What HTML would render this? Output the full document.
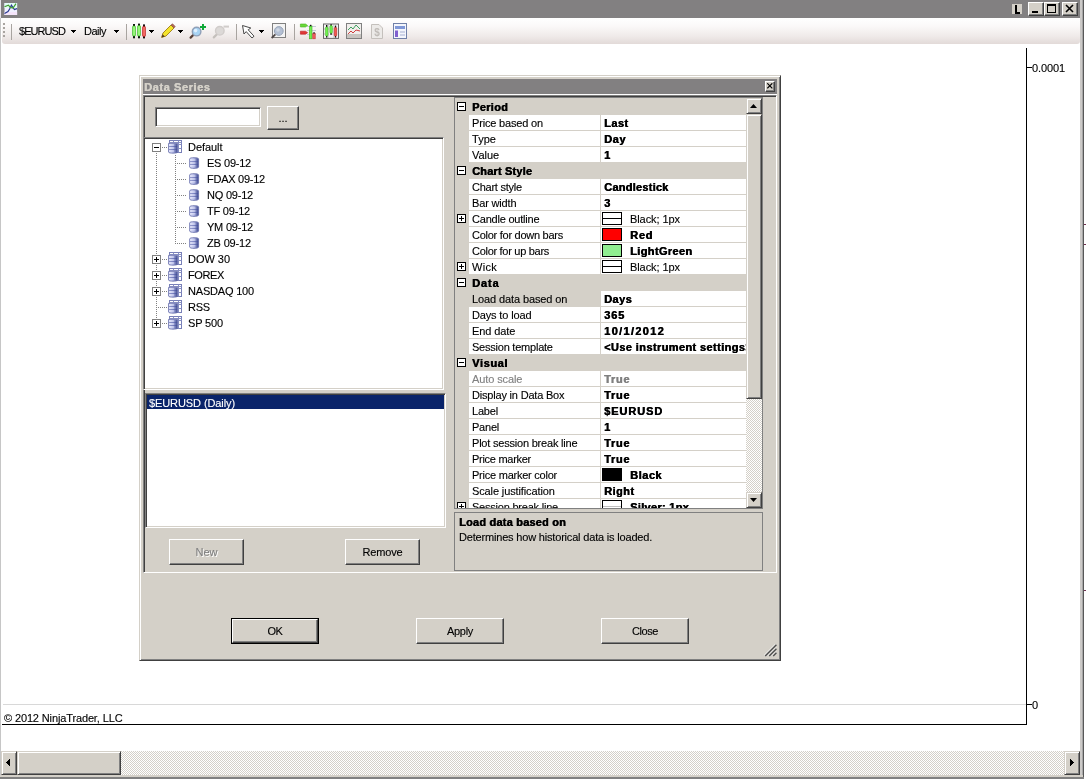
<!DOCTYPE html>
<html><head><meta charset="utf-8"><title>Data Series</title>
<style>
*{box-sizing:border-box;margin:0;padding:0}
html,body{width:1086px;height:780px;overflow:hidden;background:#fff}
body{position:relative;font-family:"Liberation Sans",sans-serif;font-size:11px;color:#000;line-height:1;-webkit-text-stroke:.12px currentColor}
.a{position:absolute}
.t{position:absolute;white-space:nowrap;font-size:11px;line-height:13px;height:13px}
.b{font-weight:bold}
.cat,.row .v{text-shadow:.45px 0 0 currentColor}
.face{background:#D4D0C8}
.btn{position:absolute;background:#D4D0C8;border:1px solid;border-color:#fff #404040 #404040 #fff;box-shadow:inset -1px -1px 0 #808080}
.btn span{position:absolute;left:0;right:0;text-align:center;font-size:11px;line-height:13px}
.sunk{position:absolute;border:1px solid;border-color:#808080 #fff #fff #808080}
.sunk2{position:absolute;border:1px solid;border-color:#808080 #fff #fff #808080;box-shadow:inset 1px 1px 0 #404040, inset -1px -1px 0 #D4D0C8}
.dither{background-image:conic-gradient(#fff 25%,#D4D0C8 0 50%,#fff 0 75%,#D4D0C8 0);background-size:2px 2px}
.sb{position:absolute;background:#D4D0C8;border:1px solid;border-color:#D4D0C8 #404040 #404040 #D4D0C8;box-shadow:inset 1px 1px 0 #fff, inset -1px -1px 0 #808080}
.row{position:absolute;left:469px;width:277px;height:16px;background:#fff;border-bottom:1px solid #D4D0C8}
.wrap{position:absolute;left:0;top:0;width:1086px;height:780px;will-change:transform}
.row .l{position:absolute;left:3px;top:2px;font-size:11px;line-height:13px;white-space:nowrap}
.row .v{position:absolute;left:135px;top:2px;font-size:11px;line-height:13px;white-space:nowrap;font-weight:bold;width:142px;overflow:hidden}
.row .d{position:absolute;left:131px;top:0;width:1px;height:16px;background:#D4D0C8}
.cat{position:absolute;left:472px;font-weight:bold;font-size:11px;line-height:13px;white-space:nowrap}
.pm{position:absolute;width:9px;height:9px;border:1px solid #000;background:#fff}
.pm i{position:absolute;left:1px;top:3px;width:5px;height:1px;background:#000}
.pm b{position:absolute;left:3px;top:1px;width:1px;height:5px;background:#000}
.tpm{position:absolute;width:9px;height:9px;border:1px solid #808080;background:#fff}
.tpm i{position:absolute;left:1px;top:3px;width:5px;height:1px;background:#000}
.tpm b{position:absolute;left:3px;top:1px;width:1px;height:5px;background:#000}
.sw{position:absolute;left:133px;top:1px;width:20px;height:13px;border:1px solid #000}
.hd{position:absolute;height:1px;background-image:linear-gradient(90deg,#808080 50%,transparent 0);background-size:2px 1px}
.vd{position:absolute;width:1px;background-image:linear-gradient(#808080 50%,transparent 0);background-size:1px 2px}
</style></head><body><div class="wrap">

<div class="a" style="left:0;top:0;width:1080px;height:18px;background:#828081"></div>
<div class="a" style="left:0;top:0;width:1px;height:18px;background:#E8E4EC"></div>
<div class="a" style="left:0;top:18px;width:1px;height:760px;background:#C6C6C6"></div>
<div class="a" style="left:1080px;top:0;width:2px;height:778px;background:#CCCAC8"></div>
<div class="a" style="left:1082px;top:0;width:1px;height:778px;background:#A8A8A8"></div>
<div class="a" style="left:1083px;top:0;width:1px;height:779px;background:#585858"></div>
<div class="a" style="left:1084px;top:224px;width:2px;height:1px;background:#703050"></div>
<div class="a" style="left:1084px;top:244px;width:2px;height:1px;background:#703050"></div>
<div class="a" style="left:1084px;top:590px;width:2px;height:1px;background:#703050"></div>
<div class="a" style="left:2px;top:18px;width:1078px;height:26px;border-radius:0 0 3px 3px;background:linear-gradient(#fff 0%,#FBF9F9 30%,#EFEAE9 70%,#E2DAD8 100%)"></div>
<svg class="a" style="left:4px;top:2px" width="14" height="14" viewBox="0 0 14 14"><rect x=".5" y="1" width="12.6" height="12" fill="#F0F0FF"/><rect x=".5" y="1" width="12.6" height="5" fill="#E4FAF8"/><rect x=".5" y="10" width="12.6" height="3" fill="#F4E4FA"/><path d="M.5 11.5 L4 9.6 L5.6 7 L7.4 3.2 L10.4 7.6 L13 6.6" stroke="#283890" stroke-width="1.2" fill="none"/><path d="M.5 4.8 L4.4 3.2 L6.4 5.4 L9 6 L12 1.6" stroke="#40A030" stroke-width="1.2" fill="none"/></svg>
<div class="a" style="left:1012px;top:4px;width:10px;height:10px;background:#D4D0C8"></div><div class="a" style="left:1015px;top:5px;width:2px;height:9px;background:#000"></div><div class="a" style="left:1015px;top:12px;width:5px;height:2px;background:#000"></div>
<div class="btn" style="left:1028px;top:2px;width:16px;height:14px"></div>
<div class="btn" style="left:1044px;top:2px;width:16px;height:14px"></div>
<div class="btn" style="left:1062px;top:2px;width:16px;height:14px"></div>
<div class="a" style="left:1032px;top:11px;width:6px;height:2px;background:#000"></div>
<div class="a" style="left:1047px;top:4px;width:9px;height:9px;border:1px solid #000;border-top-width:2px"></div>
<svg class="a" style="left:1065px;top:4px" width="10" height="9" viewBox="0 0 10 9"><path d="M1 1 L8 8 M8 1 L1 8" stroke="#000" stroke-width="1.6" fill="none"/></svg>
<div class="a" style="left:3px;top:23px;width:2px;height:2px;background:#A8A4A0"></div>
<div class="a" style="left:3px;top:27px;width:2px;height:2px;background:#A8A4A0"></div>
<div class="a" style="left:3px;top:31px;width:2px;height:2px;background:#A8A4A0"></div>
<div class="a" style="left:3px;top:35px;width:2px;height:2px;background:#A8A4A0"></div>
<div class="a" style="left:11px;top:24px;width:1px;height:16px;background:#A8A4A0"></div>
<div class="t" style="left:19px;top:25px;letter-spacing:-0.938px;">$EURUSD</div>
<div class="a" style="left:71px;top:30px;width:5px;height:1px;background:#000"></div><div class="a" style="left:72px;top:31px;width:3px;height:1px;background:#000"></div><div class="a" style="left:73px;top:32px;width:1px;height:1px;background:#000"></div>
<div class="t" style="left:84px;top:25px;letter-spacing:-0.487px;">Daily</div>
<div class="a" style="left:114px;top:30px;width:5px;height:1px;background:#000"></div><div class="a" style="left:115px;top:31px;width:3px;height:1px;background:#000"></div><div class="a" style="left:116px;top:32px;width:1px;height:1px;background:#000"></div>
<div class="a" style="left:126px;top:24px;width:1px;height:16px;background:#A8A4A0"></div>
<svg class="a" style="left:131px;top:23px" width="16" height="16" viewBox="0 0 16 16">
<rect x="2" y="1" width="2" height="14.3" fill="#101810"/><rect x="1.5" y="3" width="3" height="10" rx="1" fill="#78F058" stroke="#38B028" stroke-width=".6"/><rect x="2.6" y="3.5" width=".9" height="9" fill="#B8FFA0"/>
<rect x="7" y="0.6" width="2" height="14.7" fill="#101810"/><rect x="6.5" y="2.6" width="3" height="10.4" rx="1" fill="#78F058" stroke="#38B028" stroke-width=".6"/><rect x="7.6" y="3.2" width=".9" height="9.2" fill="#B8FFA0"/>
<rect x="12" y="1.4" width="2" height="14" fill="#181010"/><rect x="11.5" y="3.4" width="3" height="10" rx="1" fill="#E84848" stroke="#B02020" stroke-width=".6"/><rect x="12.6" y="4" width=".9" height="8.8" fill="#FF9080"/></svg>
<div class="a" style="left:149px;top:30px;width:5px;height:1px;background:#000"></div><div class="a" style="left:150px;top:31px;width:3px;height:1px;background:#000"></div><div class="a" style="left:151px;top:32px;width:1px;height:1px;background:#000"></div>
<svg class="a" style="left:160px;top:23px" width="16" height="16" viewBox="0 0 16 16"><path d="M1.6 14.4 L3 10 L11 2 L14 5 L6 13 Z" fill="#F4E42C" stroke="#A88820" stroke-width="1"/><path d="M1.6 14.4 L2.6 11.2 L4.8 13.4 Z" fill="#503820"/><path d="M11 2 L12.5 0.8 L15.2 3.5 L14 5Z" fill="#B86858" stroke="#805040" stroke-width=".6"/></svg>
<div class="a" style="left:178px;top:30px;width:5px;height:1px;background:#000"></div><div class="a" style="left:179px;top:31px;width:3px;height:1px;background:#000"></div><div class="a" style="left:180px;top:32px;width:1px;height:1px;background:#000"></div>
<svg class="a" style="left:188px;top:22px" width="18" height="18" viewBox="0 0 18 18"><path d="M2.6 15.6 L6 12.2" stroke="#584038" stroke-width="2.2" stroke-linecap="round"/><circle cx="8.6" cy="9.6" r="4.3" fill="#A8D4F4" stroke="#90A0B8" stroke-width="1.4"/><circle cx="7.6" cy="8.6" r="1.8" fill="#E0F0FF"/><path d="M15 2 V8 M12 5 H18" stroke="#10A838" stroke-width="2"/></svg>
<svg class="a" style="left:211px;top:22px" width="18" height="18" viewBox="0 0 18 18"><path d="M2.8 15.4 L6 12.2" stroke="#C4C0BC" stroke-width="2.2" stroke-linecap="round"/><circle cx="8.8" cy="8.8" r="4.3" fill="#DCD9D7" stroke="#D0CCCA" stroke-width="1.4"/><path d="M12.5 4.6 H18" stroke="#D0CCCA" stroke-width="2"/></svg>
<div class="a" style="left:236px;top:24px;width:1px;height:16px;background:#A8A4A0"></div>
<svg class="a" style="left:241px;top:24px" width="14" height="16" viewBox="0 0 14 16"><path d="M1.5 1.5 L3 10 L5.2 7.6 L11 14 L13 12.2 L7.2 5.8 L9.8 4 Z" fill="#fff" stroke="#484848" stroke-width="1"/></svg>
<div class="a" style="left:259px;top:30px;width:5px;height:1px;background:#000"></div><div class="a" style="left:260px;top:31px;width:3px;height:1px;background:#000"></div><div class="a" style="left:261px;top:32px;width:1px;height:1px;background:#000"></div>
<svg class="a" style="left:270px;top:22px" width="18" height="18" viewBox="0 0 18 18"><rect x="2.5" y="1.5" width="13" height="14" fill="#F4F4F4" stroke="#808080"/><circle cx="8.8" cy="9" r="4.4" fill="#B4C0D4" stroke="#98A4B8" stroke-width="1"/><circle cx="8" cy="8" r="1.8" fill="#D0D8E4"/><path d="M1.6 16 L5.4 12.4" stroke="#504848" stroke-width="1.8"/></svg>
<div class="a" style="left:294px;top:24px;width:1px;height:16px;background:#A8A4A0"></div>
<svg class="a" style="left:298px;top:22px" width="20" height="18" viewBox="0 0 20 18"><path d="M9 4.5 H18 M9 8.5 H18 M9 12.5 H18" stroke="#C8C8D8" stroke-width="1"/><path d="M2.4 2 H7.5 L9.6 3.5 L7.5 5 H2.4 Z" fill="#68D838" stroke="#48B020" stroke-width=".6"/><path d="M2.4 9.2 H7.5 L9.6 10.7 L7.5 12.2 H2.4 Z" fill="#E03838" stroke="#B82020" stroke-width=".6"/><rect x="11.4" y="4" width="2.6" height="12.8" fill="#70F050" stroke="#40B020" stroke-width=".6"/><rect x="12" y="2.8" width="1.4" height="1.4" fill="#101010"/><rect x="14.8" y="11.4" width="2.4" height="5.4" fill="#F06060" stroke="#C03030" stroke-width=".6"/><rect x="15.4" y="10.2" width="1.3" height="1.3" fill="#101010"/></svg>
<svg class="a" style="left:322px;top:22px" width="18" height="18" viewBox="0 0 18 18"><rect x="1.5" y="2" width="15" height="14.4" fill="#F4F4F4" stroke="#686868"/><path d="M6.5 2.5V16M11.5 2.5V16M2 7H16M2 12H16" stroke="#A8A8A8" stroke-width=".7" stroke-dasharray="1 1"/><rect x="4" y="3" width="1.4" height="12.6" fill="#101010"/><rect x="3.4" y="5" width="2.6" height="9" rx="1" fill="#70F050" stroke="#40B020" stroke-width=".5"/><rect x="8.4" y="2.2" width="1.4" height="10.6" fill="#101010"/><rect x="7.8" y="3.6" width="2.6" height="7.6" rx="1" fill="#70F050" stroke="#40B020" stroke-width=".5"/><rect x="12.8" y="3.6" width="1.4" height="12" fill="#101010"/><rect x="12.2" y="5.4" width="2.6" height="8.6" rx="1" fill="#F05850" stroke="#C03030" stroke-width=".5"/></svg>
<svg class="a" style="left:345px;top:22px" width="18" height="18" viewBox="0 0 18 18"><rect x="1.5" y="1.5" width="15" height="15" fill="#F0EEEC" stroke="#808080"/><rect x="2" y="12" width="14" height="4" fill="#C8C4C0"/><path d="M3 8 L6 5 L8 7 L11 3 L15 7" stroke="#40A060" stroke-width="1" fill="none"/><path d="M3 12 L6 9 L8 11 L11 8 L15 9" stroke="#D04040" stroke-width="1" fill="none"/></svg>
<svg class="a" style="left:369px;top:22px" width="16" height="18" viewBox="0 0 16 18"><path d="M2.5 2.5 H10 L13.5 6 V16.5 H2.5 Z" fill="#ECEAE8" stroke="#C4C0BC"/><text x="8" y="13.5" font-family="Liberation Sans" font-weight="bold" font-size="10" text-anchor="middle" fill="#C0BCB8">$</text></svg>
<svg class="a" style="left:392px;top:22px" width="16" height="18" viewBox="0 0 16 18"><rect x="1.5" y="1.5" width="13" height="15" fill="#F4F6FC" stroke="#7080A8"/><rect x="3" y="4" width="10" height="3" fill="#8098D8"/><rect x="3" y="8.5" width="3" height="6.5" fill="#8060D0"/><path d="M8 10H13M8 13H13" stroke="#C0C8E0" stroke-width="1.5"/></svg>
<div class="a" style="left:1026px;top:48px;width:1px;height:677px;background:#000"></div>
<div class="a" style="left:2px;top:724px;width:1025px;height:1px;background:#000"></div>
<div class="a" style="left:3px;top:704px;width:1023px;height:1px;background:#D8D8D8"></div>
<div class="a" style="left:1027px;top:67px;width:5px;height:1px;background:#000"></div>
<div class="a" style="left:1027px;top:704px;width:5px;height:1px;background:#000"></div>
<div class="t" style="left:1032px;top:62px;letter-spacing:-0.115px;">0.0001</div>
<div class="t" style="left:1032px;top:699px;letter-spacing:-0.125px;">0</div>
<div class="t" style="left:4px;top:712px;letter-spacing:-0.130px;">© 2012 NinjaTrader, LLC</div>
<div class="a dither" style="left:1px;top:751px;width:1079px;height:24px"></div>
<div class="sb" style="left:1px;top:751px;width:16px;height:24px"></div>
<div class="sb" style="left:17px;top:751px;width:104px;height:24px"></div>
<div class="sb" style="left:1064px;top:751px;width:16px;height:24px"></div>
<svg class="a" style="left:6px;top:759px" width="4" height="7" viewBox="0 0 4 7" shape-rendering="crispEdges"><path d="M4 0 V7 L0.2 3.5Z" fill="#000"/></svg>
<svg class="a" style="left:1070px;top:759px" width="4" height="7" viewBox="0 0 4 7" shape-rendering="crispEdges"><path d="M0 0 V7 L3.8 3.5Z" fill="#000"/></svg>
<div class="a" style="left:0;top:775px;width:1083px;height:2px;background:#D4D0C8"></div>
<div class="a" style="left:0;top:777px;width:1084px;height:2px;background:#808080"></div>
<div class="a" style="left:0;top:779px;width:1086px;height:1px;background:#fff"></div>
<div class="a" style="left:139px;top:75px;width:642px;height:586px;background:#D4D0C8;border:1px solid;border-color:#D4D0C8 #404040 #404040 #D4D0C8;box-shadow:inset 1px 1px 0 #fff, inset -1px -1px 0 #808080"></div>
<div class="a" style="left:143px;top:79px;width:634px;height:15px;background:#828081"></div>
<div class="a" style="left:143px;top:94px;width:634px;height:1px;background:#fff"></div>
<div class="t" style="left:144px;top:81px;letter-spacing:0.585px;font-weight:bold;text-shadow:.45px 0 0 currentColor;color:#D4D0C8;">Data Series</div>
<div class="btn" style="left:765px;top:81px;width:10px;height:11px"></div>
<svg class="a" style="left:767px;top:83px" width="6" height="6" viewBox="0 0 6 6"><path d="M0.3 0.3 L5.3 5.3 M5.3 0.3 L0.3 5.3" stroke="#000" stroke-width="1.15" fill="none"/></svg>
<div class="sunk2" style="left:143px;top:95px;width:634px;height:478px"></div>
<div class="sunk2" style="left:155px;top:107px;width:106px;height:20px;background:#fff"></div>
<div class="sunk2" style="left:143px;top:137px;width:301px;height:253px;background:#fff"></div>
<div class="sunk2" style="left:145px;top:393px;width:301px;height:135px;background:#fff"></div>
<div class="a" style="left:147px;top:395px;width:297px;height:14px;background:#0A246A"></div>
<div class="t" style="left:149px;top:397px;letter-spacing:-0.092px;color:#fff;">$EURUSD (Daily)</div>
<svg width="0" height="0" style="position:absolute"><defs><linearGradient id="cg" x1="0" x2="1" y1="0" y2="0"><stop offset="0" stop-color="#E6E8FC"/><stop offset=".5" stop-color="#B0B6E4"/><stop offset="1" stop-color="#38448C"/></linearGradient></defs></svg>
<div class="vd" style="left:156px;top:153px;height:171px"></div>
<div class="hd" style="left:162px;top:147px;width:6px"></div>
<div class="tpm" style="left:152px;top:143px"><i></i></div>
<svg class="a" style="left:168px;top:140px" width="14" height="14" viewBox="0 0 14 14"><rect x="1.5" y=".5" width="12" height="12" fill="#fff" stroke="#7880B8"/><path d="M1.5 2.5H13.5M10.5 .5V12.5M10.5 4.5H13.5M10.5 8.5H13.5M5.5 .5V2.5" stroke="#8890C4" stroke-width="1"/><path d="M.5 3.4 H9.6 V12 C9.6 13.6 .5 13.6 .5 12 Z" fill="url(#cg)" stroke="#6870AC" stroke-width=".8"/><path d="M1 6.5H9.2M1 9.5H9.2" stroke="#3C4898" stroke-width=".9" opacity=".55"/><path d="M1.4 5H6M1.4 8H6M1.4 11H6" stroke="#F0F2FF" stroke-width=".9" opacity=".7"/></svg>
<div class="t" style="left:188px;top:141px;letter-spacing:-0.068px;">Default</div>
<div class="hd" style="left:162px;top:259px;width:6px"></div>
<div class="tpm" style="left:152px;top:255px"><i></i><b></b></div>
<svg class="a" style="left:168px;top:252px" width="14" height="14" viewBox="0 0 14 14"><rect x="1.5" y=".5" width="12" height="12" fill="#fff" stroke="#7880B8"/><path d="M1.5 2.5H13.5M10.5 .5V12.5M10.5 4.5H13.5M10.5 8.5H13.5M5.5 .5V2.5" stroke="#8890C4" stroke-width="1"/><path d="M.5 3.4 H9.6 V12 C9.6 13.6 .5 13.6 .5 12 Z" fill="url(#cg)" stroke="#6870AC" stroke-width=".8"/><path d="M1 6.5H9.2M1 9.5H9.2" stroke="#3C4898" stroke-width=".9" opacity=".55"/><path d="M1.4 5H6M1.4 8H6M1.4 11H6" stroke="#F0F2FF" stroke-width=".9" opacity=".7"/></svg>
<div class="t" style="left:188px;top:253px;letter-spacing:-0.031px;">DOW 30</div>
<div class="hd" style="left:162px;top:275px;width:6px"></div>
<div class="tpm" style="left:152px;top:271px"><i></i><b></b></div>
<svg class="a" style="left:168px;top:268px" width="14" height="14" viewBox="0 0 14 14"><rect x="1.5" y=".5" width="12" height="12" fill="#fff" stroke="#7880B8"/><path d="M1.5 2.5H13.5M10.5 .5V12.5M10.5 4.5H13.5M10.5 8.5H13.5M5.5 .5V2.5" stroke="#8890C4" stroke-width="1"/><path d="M.5 3.4 H9.6 V12 C9.6 13.6 .5 13.6 .5 12 Z" fill="url(#cg)" stroke="#6870AC" stroke-width=".8"/><path d="M1 6.5H9.2M1 9.5H9.2" stroke="#3C4898" stroke-width=".9" opacity=".55"/><path d="M1.4 5H6M1.4 8H6M1.4 11H6" stroke="#F0F2FF" stroke-width=".9" opacity=".7"/></svg>
<div class="t" style="left:188px;top:269px;letter-spacing:-0.381px;">FOREX</div>
<div class="hd" style="left:162px;top:291px;width:6px"></div>
<div class="tpm" style="left:152px;top:287px"><i></i><b></b></div>
<svg class="a" style="left:168px;top:284px" width="14" height="14" viewBox="0 0 14 14"><rect x="1.5" y=".5" width="12" height="12" fill="#fff" stroke="#7880B8"/><path d="M1.5 2.5H13.5M10.5 .5V12.5M10.5 4.5H13.5M10.5 8.5H13.5M5.5 .5V2.5" stroke="#8890C4" stroke-width="1"/><path d="M.5 3.4 H9.6 V12 C9.6 13.6 .5 13.6 .5 12 Z" fill="url(#cg)" stroke="#6870AC" stroke-width=".8"/><path d="M1 6.5H9.2M1 9.5H9.2" stroke="#3C4898" stroke-width=".9" opacity=".55"/><path d="M1.4 5H6M1.4 8H6M1.4 11H6" stroke="#F0F2FF" stroke-width=".9" opacity=".7"/></svg>
<div class="t" style="left:188px;top:285px;letter-spacing:-0.191px;">NASDAQ 100</div>
<div class="hd" style="left:158px;top:307px;width:10px"></div>
<svg class="a" style="left:168px;top:300px" width="14" height="14" viewBox="0 0 14 14"><rect x="1.5" y=".5" width="12" height="12" fill="#fff" stroke="#7880B8"/><path d="M1.5 2.5H13.5M10.5 .5V12.5M10.5 4.5H13.5M10.5 8.5H13.5M5.5 .5V2.5" stroke="#8890C4" stroke-width="1"/><path d="M.5 3.4 H9.6 V12 C9.6 13.6 .5 13.6 .5 12 Z" fill="url(#cg)" stroke="#6870AC" stroke-width=".8"/><path d="M1 6.5H9.2M1 9.5H9.2" stroke="#3C4898" stroke-width=".9" opacity=".55"/><path d="M1.4 5H6M1.4 8H6M1.4 11H6" stroke="#F0F2FF" stroke-width=".9" opacity=".7"/></svg>
<div class="t" style="left:188px;top:301px;letter-spacing:-0.208px;">RSS</div>
<div class="hd" style="left:162px;top:323px;width:6px"></div>
<div class="tpm" style="left:152px;top:319px"><i></i><b></b></div>
<svg class="a" style="left:168px;top:316px" width="14" height="14" viewBox="0 0 14 14"><rect x="1.5" y=".5" width="12" height="12" fill="#fff" stroke="#7880B8"/><path d="M1.5 2.5H13.5M10.5 .5V12.5M10.5 4.5H13.5M10.5 8.5H13.5M5.5 .5V2.5" stroke="#8890C4" stroke-width="1"/><path d="M.5 3.4 H9.6 V12 C9.6 13.6 .5 13.6 .5 12 Z" fill="url(#cg)" stroke="#6870AC" stroke-width=".8"/><path d="M1 6.5H9.2M1 9.5H9.2" stroke="#3C4898" stroke-width=".9" opacity=".55"/><path d="M1.4 5H6M1.4 8H6M1.4 11H6" stroke="#F0F2FF" stroke-width=".9" opacity=".7"/></svg>
<div class="t" style="left:188px;top:317px;letter-spacing:-0.154px;">SP 500</div>
<div class="vd" style="left:175px;top:155px;height:89px"></div>
<div class="hd" style="left:177px;top:163px;width:10px"></div>
<svg class="a" style="left:189px;top:157px" width="11" height="12" viewBox="0 0 11 12"><path d="M.6 1.9 C.6 .2 9.6 .2 9.6 1.9 V10 C9.6 11.9 .6 11.9 .6 10 Z" fill="url(#cg)" stroke="#6870AC" stroke-width=".8"/><path d="M1 4.6H9.2M1 7.4H9.2" stroke="#3C4898" stroke-width=".9" opacity=".55"/><path d="M1.4 3H6.4M1.4 6H6.4M1.4 8.8H6.4" stroke="#F0F2FF" stroke-width=".9" opacity=".7"/></svg>
<div class="t" style="left:207px;top:157px;letter-spacing:-0.238px;">ES 09-12</div>
<div class="hd" style="left:177px;top:179px;width:10px"></div>
<svg class="a" style="left:189px;top:173px" width="11" height="12" viewBox="0 0 11 12"><path d="M.6 1.9 C.6 .2 9.6 .2 9.6 1.9 V10 C9.6 11.9 .6 11.9 .6 10 Z" fill="url(#cg)" stroke="#6870AC" stroke-width=".8"/><path d="M1 4.6H9.2M1 7.4H9.2" stroke="#3C4898" stroke-width=".9" opacity=".55"/><path d="M1.4 3H6.4M1.4 6H6.4M1.4 8.8H6.4" stroke="#F0F2FF" stroke-width=".9" opacity=".7"/></svg>
<div class="t" style="left:207px;top:173px;letter-spacing:-0.256px;">FDAX 09-12</div>
<div class="hd" style="left:177px;top:195px;width:10px"></div>
<svg class="a" style="left:189px;top:189px" width="11" height="12" viewBox="0 0 11 12"><path d="M.6 1.9 C.6 .2 9.6 .2 9.6 1.9 V10 C9.6 11.9 .6 11.9 .6 10 Z" fill="url(#cg)" stroke="#6870AC" stroke-width=".8"/><path d="M1 4.6H9.2M1 7.4H9.2" stroke="#3C4898" stroke-width=".9" opacity=".55"/><path d="M1.4 3H6.4M1.4 6H6.4M1.4 8.8H6.4" stroke="#F0F2FF" stroke-width=".9" opacity=".7"/></svg>
<div class="t" style="left:207px;top:189px;letter-spacing:-0.215px;">NQ 09-12</div>
<div class="hd" style="left:177px;top:211px;width:10px"></div>
<svg class="a" style="left:189px;top:205px" width="11" height="12" viewBox="0 0 11 12"><path d="M.6 1.9 C.6 .2 9.6 .2 9.6 1.9 V10 C9.6 11.9 .6 11.9 .6 10 Z" fill="url(#cg)" stroke="#6870AC" stroke-width=".8"/><path d="M1 4.6H9.2M1 7.4H9.2" stroke="#3C4898" stroke-width=".9" opacity=".55"/><path d="M1.4 3H6.4M1.4 6H6.4M1.4 8.8H6.4" stroke="#F0F2FF" stroke-width=".9" opacity=".7"/></svg>
<div class="t" style="left:207px;top:205px;letter-spacing:-0.207px;">TF 09-12</div>
<div class="hd" style="left:177px;top:227px;width:10px"></div>
<svg class="a" style="left:189px;top:221px" width="11" height="12" viewBox="0 0 11 12"><path d="M.6 1.9 C.6 .2 9.6 .2 9.6 1.9 V10 C9.6 11.9 .6 11.9 .6 10 Z" fill="url(#cg)" stroke="#6870AC" stroke-width=".8"/><path d="M1 4.6H9.2M1 7.4H9.2" stroke="#3C4898" stroke-width=".9" opacity=".55"/><path d="M1.4 3H6.4M1.4 6H6.4M1.4 8.8H6.4" stroke="#F0F2FF" stroke-width=".9" opacity=".7"/></svg>
<div class="t" style="left:207px;top:221px;letter-spacing:-0.215px;">YM 09-12</div>
<div class="hd" style="left:177px;top:243px;width:10px"></div>
<svg class="a" style="left:189px;top:237px" width="11" height="12" viewBox="0 0 11 12"><path d="M.6 1.9 C.6 .2 9.6 .2 9.6 1.9 V10 C9.6 11.9 .6 11.9 .6 10 Z" fill="url(#cg)" stroke="#6870AC" stroke-width=".8"/><path d="M1 4.6H9.2M1 7.4H9.2" stroke="#3C4898" stroke-width=".9" opacity=".55"/><path d="M1.4 3H6.4M1.4 6H6.4M1.4 8.8H6.4" stroke="#F0F2FF" stroke-width=".9" opacity=".7"/></svg>
<div class="t" style="left:207px;top:237px;letter-spacing:-0.160px;">ZB 09-12</div>
<div class="btn" style="left:267px;top:106px;width:32px;height:24px"><span style="top:5px;letter-spacing:-0.062px;">...</span></div>
<div class="btn" style="left:169px;top:539px;width:75px;height:26px"><span style="top:6px;letter-spacing:0.000px;color:#808080;text-shadow:1px 1px 0 #fff;">New</span></div>
<div class="btn" style="left:345px;top:539px;width:75px;height:26px"><span style="top:6px;letter-spacing:-0.161px;">Remove</span></div>
<div class="a" style="left:231px;top:618px;width:88px;height:26px;background:#000"></div>
<div class="btn" style="left:232px;top:619px;width:86px;height:24px"><span style="top:5px;letter-spacing:-0.453px;">OK</span></div>
<div class="btn" style="left:416px;top:618px;width:88px;height:26px"><span style="top:6px;letter-spacing:-0.306px;">Apply</span></div>
<div class="btn" style="left:601px;top:618px;width:88px;height:26px"><span style="top:6px;letter-spacing:-0.425px;">Close</span></div>
<svg class="a" style="left:764px;top:644px" width="13" height="13" viewBox="0 0 13 13"><path d="M12 -0.4 L0 11.6 M12 3.6 L4 11.6 M12 7.6 L8 11.6" stroke="#fff" stroke-width="1"/><path d="M12.4 0.8 L1.2 12 M12.4 4.8 L5.2 12 M12.4 8.8 L9.2 12" stroke="#505050" stroke-width="1.5"/></svg>
<div class="a" style="left:454px;top:97px;width:309px;height:412px;border:1px solid #808080;background:#D4D0C8"></div>
<div class="a" style="left:455px;top:98px;width:291px;height:410px;overflow:hidden" id="pg"></div>
<div class="pm" style="left:457px;top:102px"><i></i></div>
<div class="cat" style="top:101px;letter-spacing:0.292px;">Period</div>
<div class="row" style="top:115px"><div class="l" style="letter-spacing:-0.174px;">Price based on</div><div class="d"></div><div class="v" style="letter-spacing:0.444px;">Last</div></div>
<div class="row" style="top:131px"><div class="l" style="letter-spacing:0.035px;">Type</div><div class="d"></div><div class="v" style="letter-spacing:0.604px;">Day</div></div>
<div class="row" style="top:147px"><div class="l" style="letter-spacing:-0.069px;">Value</div><div class="d"></div><div class="v" style="letter-spacing:0.875px;">1</div></div>
<div class="pm" style="left:457px;top:166px"><i></i></div>
<div class="cat" style="top:165px;letter-spacing:0.173px;">Chart Style</div>
<div class="row" style="top:179px"><div class="l" style="letter-spacing:-0.254px;">Chart style</div><div class="d"></div><div class="v" style="letter-spacing:0.247px;">Candlestick</div></div>
<div class="row" style="top:195px"><div class="l" style="letter-spacing:-0.164px;">Bar width</div><div class="d"></div><div class="v" style="letter-spacing:0.875px;">3</div></div>
<div class="pm" style="left:457px;top:214px"><i></i><b></b></div>
<div class="row" style="top:211px"><div class="l" style="letter-spacing:-0.212px;">Candle outline</div><div class="d"></div><div class="sw" style="background:#fff"><div class="a" style="left:0;top:5px;width:18px;height:1px;background:#000"></div></div><div class="v" style="letter-spacing:-0.078px;left:161px;width:116px;font-weight:normal;text-shadow:none;">Black; 1px</div></div>
<div class="row" style="top:227px"><div class="l" style="letter-spacing:-0.265px;">Color for down bars</div><div class="d"></div><div class="sw" style="background:#FF0000"></div><div class="v" style="letter-spacing:0.740px;left:161px;width:116px;">Red</div></div>
<div class="row" style="top:243px"><div class="l" style="letter-spacing:-0.292px;">Color for up bars</div><div class="d"></div><div class="sw" style="background:#90EE90"></div><div class="v" style="letter-spacing:0.371px;left:161px;width:116px;">LightGreen</div></div>
<div class="pm" style="left:457px;top:262px"><i></i><b></b></div>
<div class="row" style="top:259px"><div class="l" style="letter-spacing:0.297px;">Wick</div><div class="d"></div><div class="sw" style="background:#fff"><div class="a" style="left:0;top:5px;width:18px;height:1px;background:#000"></div></div><div class="v" style="letter-spacing:-0.078px;left:161px;width:116px;font-weight:normal;text-shadow:none;">Black; 1px</div></div>
<div class="pm" style="left:457px;top:278px"><i></i></div>
<div class="cat" style="top:277px;letter-spacing:0.889px;">Data</div>
<div class="row" style="top:291px"><div class="a" style="left:0;top:0;width:131px;height:15px;background:#D4D0C8"></div><div class="l" style="letter-spacing:-0.110px;">Load data based on</div><div class="d"></div><div class="v" style="letter-spacing:0.422px;">Days</div></div>
<div class="row" style="top:307px"><div class="l" style="letter-spacing:-0.149px;">Days to load</div><div class="d"></div><div class="v" style="letter-spacing:0.875px;">365</div></div>
<div class="row" style="top:323px"><div class="l" style="letter-spacing:-0.087px;">End date</div><div class="d"></div><div class="v" style="letter-spacing:1.333px;">10/1/2012</div></div>
<div class="row" style="top:339px"><div class="l" style="letter-spacing:-0.227px;">Session template</div><div class="d"></div><div class="v" style="letter-spacing:0.393px;">&lt;Use instrument settings&gt;</div></div>
<div class="pm" style="left:457px;top:358px"><i></i></div>
<div class="cat" style="top:357px;letter-spacing:0.628px;">Visual</div>
<div class="row" style="top:371px"><div class="l" style="letter-spacing:-0.101px;color:#808080;">Auto scale</div><div class="d"></div><div class="v" style="letter-spacing:0.691px;color:#808080;">True</div></div>
<div class="row" style="top:387px"><div class="l" style="letter-spacing:-0.191px;">Display in Data Box</div><div class="d"></div><div class="v" style="letter-spacing:0.691px;">True</div></div>
<div class="row" style="top:403px"><div class="l" style="letter-spacing:-0.188px;">Label</div><div class="d"></div><div class="v" style="letter-spacing:0.920px;">$EURUSD</div></div>
<div class="row" style="top:419px"><div class="l" style="letter-spacing:-0.231px;">Panel</div><div class="d"></div><div class="v" style="letter-spacing:0.875px;">1</div></div>
<div class="row" style="top:435px"><div class="l" style="letter-spacing:-0.205px;">Plot session break line</div><div class="d"></div><div class="v" style="letter-spacing:0.691px;">True</div></div>
<div class="row" style="top:451px"><div class="l" style="letter-spacing:-0.279px;">Price marker</div><div class="d"></div><div class="v" style="letter-spacing:0.691px;">True</div></div>
<div class="row" style="top:467px"><div class="l" style="letter-spacing:-0.236px;">Price marker color</div><div class="d"></div><div class="sw" style="background:#000"></div><div class="v" style="letter-spacing:0.525px;left:161px;width:116px;">Black</div></div>
<div class="row" style="top:483px"><div class="l" style="letter-spacing:-0.117px;">Scale justification</div><div class="d"></div><div class="v" style="letter-spacing:0.461px;">Right</div></div>
<div class="pm" style="left:457px;top:502px;clip-path:inset(0 0 3px 0)"><i></i><b></b></div>
<div class="row" style="top:499px;clip-path:inset(0 0 7px 0)"><div class="l" style="letter-spacing:-0.219px;">Session break line</div><div class="d"></div><div class="sw" style="background:#fff"><div class="a" style="left:0;top:5px;width:18px;height:1px;background:#C0C0C0"></div></div><div class="v" style="letter-spacing:0.301px;left:161px;width:116px;">Silver; 1px</div></div>
<div class="a dither" style="left:746px;top:98px;width:16px;height:410px"></div>
<div class="sb" style="left:746px;top:98px;width:16px;height:16px"></div>
<div class="sb" style="left:746px;top:114px;width:16px;height:285px"></div>
<div class="sb" style="left:746px;top:492px;width:16px;height:16px"></div>
<svg class="a" style="left:750px;top:104px" width="7" height="4" viewBox="0 0 7 4"><path d="M0 4 H7 L3.5 0 Z" fill="#000"/></svg>
<svg class="a" style="left:750px;top:498px" width="7" height="4" viewBox="0 0 7 4"><path d="M0 0 H7 L3.5 4 Z" fill="#000"/></svg>
<div class="a" style="left:454px;top:512px;width:309px;height:59px;border:1px solid #808080;background:#D4D0C8"></div>
<div class="t" style="left:459px;top:516px;letter-spacing:0.203px;font-weight:bold;text-shadow:.45px 0 0 currentColor;">Load data based on</div>
<div class="t" style="left:459px;top:531px;letter-spacing:-0.182px;">Determines how historical data is loaded.</div>
</div></body></html>
